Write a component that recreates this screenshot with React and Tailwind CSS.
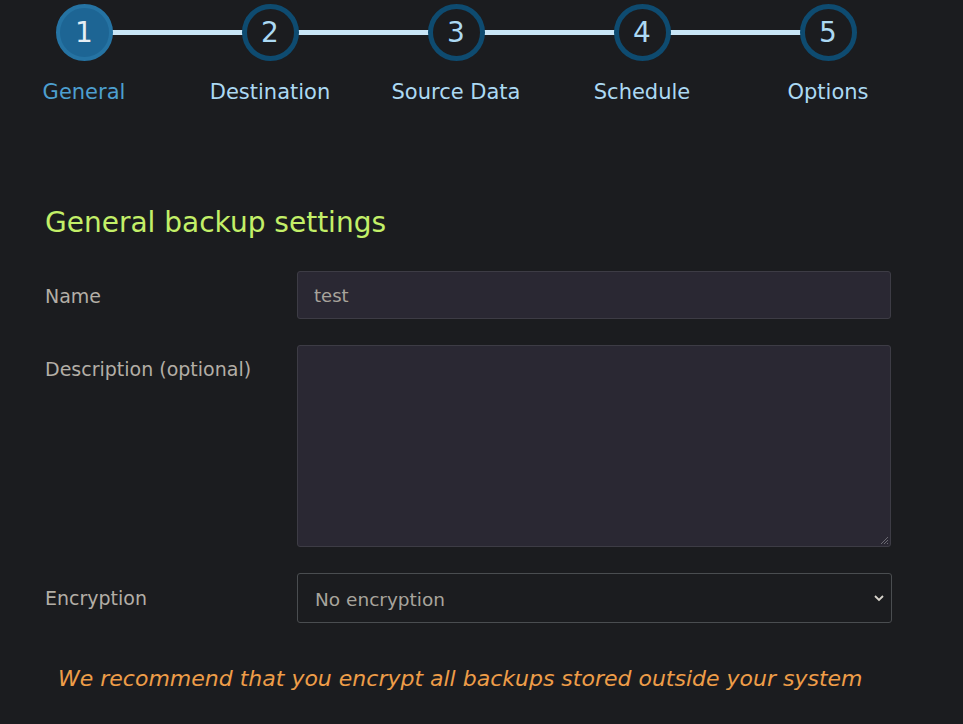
import React from "react";

const steps = ["General", "Destination", "Source Data", "Schedule", "Options"];

export default function App() {
  return (
    <div
      className="w-[963px] h-[724px] overflow-hidden bg-[#1b1c1f]"
      style={{ fontFamily: '"DejaVu Sans", "Noto Sans", sans-serif' }}
    >
      {/* Stepper */}
      <div className="relative ml-[-9px] pt-[4px] flex">
        <div className="absolute left-[93px] top-[30px] w-[744px] h-[5px] bg-[#c9e6f7]" />
        {steps.map((s, i) => (
          <div key={s} className="relative w-[186px] flex flex-col items-center">
            {i === 0 ? (
              <div className="w-[57px] h-[57px] rounded-full bg-[#1d6594] border-[4px] border-[#2573a3] flex items-center justify-center text-[28px] text-[#e6eef4] leading-none">
                {i + 1}
              </div>
            ) : (
              <div className="w-[57px] h-[57px] rounded-full bg-[#1b1c1f] border-[5px] border-[#0e4b70] flex items-center justify-center text-[28px] text-[#acd9f3] leading-none">
                {i + 1}
              </div>
            )}
            <div
              className={`mt-[21px] text-[21px] leading-none whitespace-nowrap ${
                i === 0 ? "text-[#4d9fcf]" : "text-[#acd9f3]"
              }`}
            >
              {s}
            </div>
          </div>
        ))}
      </div>

      {/* Form */}
      <div className="pl-[45px] pt-[106px]">
        <h2 className="text-[28px] leading-none text-[#c3ef68]">General backup settings</h2>

        <div className="mt-[34px] flex items-start">
          <label className="w-[252px] pt-[16px] text-[19px] leading-none text-[#b3aea6]">Name</label>
          <div className="w-[594px] h-[48px] rounded-[3px] bg-[#2a2833] border border-[#3d3c45] flex items-center px-[16px] text-[18px] text-[#a8a49c]">
            test
          </div>
        </div>

        <div className="mt-[26px] flex items-start">
          <label className="w-[252px] pt-[15px] text-[19px] leading-none text-[#b3aea6]">
            Description (optional)
          </label>
          <div className="relative w-[594px] h-[202px] rounded-[3px] bg-[#2a2833] border border-[#3d3c45]">
            <svg className="absolute right-[1px] bottom-[1px]" width="10" height="10" viewBox="0 0 10 10">
              <path d="M9 2 L2 9 M9 5 L5 9 M9 8 L8 9" stroke="#6b6a72" strokeWidth="1" />
            </svg>
          </div>
        </div>

        <div className="mt-[26px] flex items-start">
          <label className="w-[252px] pt-[16px] text-[19px] leading-none text-[#b3aea6]">Encryption</label>
          <div className="w-[595px] h-[50px] rounded-[3px] bg-[#1b1c1f] border border-[#4a4d50] flex items-center justify-between pl-[17px] pr-[6px] text-[18.5px] text-[#a8a49c]">
            <span className="pt-[4px]">No encryption</span>
            <svg width="12" height="8" viewBox="0 0 12 8">
              <path d="M2 2 L6 6 L10 2" stroke="#d8d4cc" strokeWidth="1.8" fill="none" />
            </svg>
          </div>
        </div>

        <p className="mt-[45px] ml-[13px] text-[22px] leading-none italic text-[#ee9d48]">
          We recommend that you encrypt all backups stored outside your system
        </p>
      </div>
    </div>
  );
}
